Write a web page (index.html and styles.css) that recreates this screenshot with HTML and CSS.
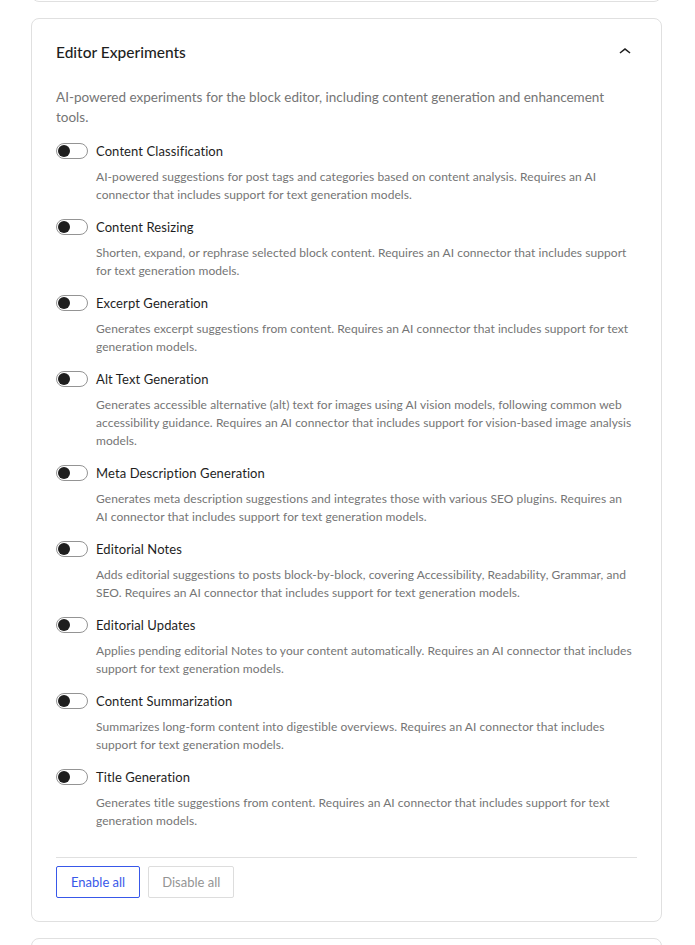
FILE: index.html
```html
<!DOCTYPE html>
<html lang="en">
<head>
    <meta charset="UTF-8">
    <meta name="viewport" content="width=device-width, initial-scale=1.0">
    <title>Experiments | Settings</title>
    <link rel="stylesheet" href="styles.css">
</head>
<body>

    <div class="settings">

        <!-- Previous panel (scrolled out of view) -->
        <section class="panel panel-stub"></section>

        <!-- Editor Experiments -->
        <section class="panel">
            <div class="panel-header">
                <h2>Editor Experiments</h2>
                <button class="panel-toggle" aria-label="Collapse">
                    <svg viewBox="0 0 24 24" width="24" height="24"><path d="M6.5 12.4L12 8l5.5 4.4-.9 1.2L12 10l-4.6 3.6-.9-1.2z"/></svg>
                </button>
            </div>

            <p class="panel-desc">AI-powered experiments for the block editor, including content generation and enhancement tools.</p>

            <ul class="experiments">
                <li class="experiment">
                    <label class="experiment-row"><span class="toggle"></span>Content Classification</label>
                    <p class="experiment-desc">AI-powered suggestions for post tags and categories based on content analysis. Requires an AI connector that includes support for text generation models.</p>
                </li>
                <li class="experiment">
                    <label class="experiment-row"><span class="toggle"></span>Content Resizing</label>
                    <p class="experiment-desc">Shorten, expand, or rephrase selected block content. Requires an AI connector that includes support for text generation models.</p>
                </li>
                <li class="experiment">
                    <label class="experiment-row"><span class="toggle"></span>Excerpt Generation</label>
                    <p class="experiment-desc">Generates excerpt suggestions from content. Requires an AI connector that includes support for text generation models.</p>
                </li>
                <li class="experiment">
                    <label class="experiment-row"><span class="toggle"></span>Alt Text Generation</label>
                    <p class="experiment-desc">Generates accessible alternative (alt) text for images using AI vision models, following common web accessibility guidance. Requires an AI connector that includes support for vision-based image analysis models.</p>
                </li>
                <li class="experiment">
                    <label class="experiment-row"><span class="toggle"></span>Meta Description Generation</label>
                    <p class="experiment-desc">Generates meta description suggestions and integrates those with various SEO plugins. Requires an AI connector that includes support for text generation models.</p>
                </li>
                <li class="experiment">
                    <label class="experiment-row"><span class="toggle"></span>Editorial Notes</label>
                    <p class="experiment-desc">Adds editorial suggestions to posts block-by-block, covering Accessibility, Readability, Grammar, and SEO. Requires an AI connector that includes support for text generation models.</p>
                </li>
                <li class="experiment">
                    <label class="experiment-row"><span class="toggle"></span>Editorial Updates</label>
                    <p class="experiment-desc">Applies pending editorial Notes to your content automatically. Requires an AI connector that includes support for text generation models.</p>
                </li>
                <li class="experiment">
                    <label class="experiment-row"><span class="toggle"></span>Content Summarization</label>
                    <p class="experiment-desc">Summarizes long-form content into digestible overviews. Requires an AI connector that includes support for text generation models.</p>
                </li>
                <li class="experiment">
                    <label class="experiment-row"><span class="toggle"></span>Title Generation</label>
                    <p class="experiment-desc">Generates title suggestions from content. Requires an AI connector that includes support for text generation models.</p>
                </li>
            </ul>

            <div class="panel-footer">
                <button class="btn btn-primary">Enable all</button>
                <button class="btn btn-muted">Disable all</button>
            </div>
        </section>

        <!-- Next panel (below the fold) -->
        <section class="panel panel-stub"></section>

    </div>

</body>
</html>
```

FILE: styles.css
```css
/* General Styles */
* {
    margin: 0;
    padding: 0;
    box-sizing: border-box;
}

body {
    font-family: 'Lato', 'Liberation Sans', sans-serif;
    background-color: #fff;
    color: #1e1e1e;
    overflow: hidden;
}

/* Panels */
.settings {
    display: flex;
    flex-direction: column;
    gap: 16px;
    margin: -65px 33px 0 31px;
}

.panel {
    background: #fff;
    border: 1px solid #e0e0e0;
    border-radius: 8px;
    padding: 24px 24px 23px;
}

.panel-stub {
    height: 67px;
}

.panel-header {
    display: flex;
    align-items: center;
    justify-content: space-between;
    height: 18px;
}

.panel-header h2 {
    font-size: 15.5px;
    font-weight: 500;
    line-height: 18px;
    color: #1e1e1e;
}

.panel-toggle {
    background: none;
    border: none;
    width: 24px;
    height: 24px;
    display: flex;
    cursor: pointer;
}

.panel-toggle svg {
    fill: #1e1e1e;
}

.panel-desc {
    margin-top: 26px;
    font-size: 13.5px;
    line-height: 20px;
    color: #757575;
}

/* Experiments list */
.experiments {
    list-style: none;
    margin-top: 14px;
    display: flex;
    flex-direction: column;
    gap: 13px;
}

.experiment-row {
    display: flex;
    align-items: center;
    gap: 8px;
    font-size: 13px;
    line-height: 20px;
    letter-spacing: 0.1px;
    color: #1e1e1e;
    cursor: pointer;
}

.toggle {
    position: relative;
    width: 32px;
    height: 16px;
    border: 1px solid #949494;
    border-radius: 8px;
    flex-shrink: 0;
}

.toggle::after {
    content: "";
    position: absolute;
    top: 1px;
    left: 1px;
    width: 12px;
    height: 12px;
    border-radius: 50%;
    background: #1e1e1e;
}

.experiment-desc {
    margin-top: 7px;
    padding: 0 3px 0 40px;
    font-size: 12px;
    line-height: 18px;
    letter-spacing: 0.06px;
    color: #757575;
}

/* Footer */
.panel-footer {
    margin-top: 27px;
    border-top: 1px solid #e0e0e0;
    padding-top: 8px;
    display: flex;
    gap: 8px;
}

.btn {
    height: 32px;
    padding: 0 14px;
    font-family: inherit;
    font-size: 13px;
    background: #fff;
    border-radius: 2px;
    cursor: pointer;
}

.btn-primary {
    border: 1px solid #3858e9;
    color: #3858e9;
}

.btn-muted {
    border: 1px solid #dddddd;
    color: #949494;
    padding: 0 13px;
}
```
